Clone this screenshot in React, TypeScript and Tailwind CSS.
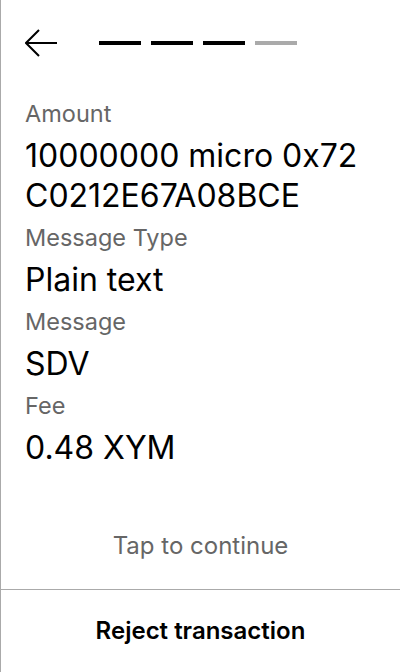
const rows = [
  { label: "Amount", value: "10000000 micro 0x72C0212E67A08BCE" },
  { label: "Message Type", value: "Plain text" },
  { label: "Message", value: "SDV" },
  { label: "Fee", value: "0.48 XYM" },
];

export default function App() {
  return (
    <div
      className="flex h-[672px] w-[400px] flex-col border-l border-[#aaaaaa] bg-white text-black"
      style={{ fontFamily: "Inter, 'Noto Sans', sans-serif" }}
    >
      {/* Header */}
      <div className="flex items-center gap-[42px] px-6 pt-[28px]">
        <svg width="32" height="30" viewBox="0 0 32 30" fill="none" stroke="black" strokeWidth="2">
          <path d="M1 15H32" />
          <path d="M14 2L1 15L14 28" />
        </svg>
        <div className="flex gap-[10px]">
          <div className="h-1 w-[42px] bg-black" />
          <div className="h-1 w-[42px] bg-black" />
          <div className="h-1 w-[42px] bg-black" />
          <div className="h-1 w-[42px] bg-[#aaaaaa]" />
        </div>
      </div>

      {/* Details */}
      <div className="flex flex-col px-6 pt-[34px]">
        {rows.map((r) => (
          <div key={r.label} className="flex flex-col">
            <span className="text-[23.5px] leading-[44px] text-[#666666]">{r.label}</span>
            <span className="max-w-[345px] break-all text-[32px] leading-[40px]">{r.value}</span>
          </div>
        ))}
      </div>

      <div className="mt-auto flex flex-col">
        <div className="pb-[25px] text-center text-[24px] text-[#666666]">Tap to continue</div>
        <div className="flex h-[83px] items-center justify-center border-t border-[#aaaaaa] text-[24px] font-semibold">
          Reject transaction
        </div>
      </div>
    </div>
  );
}
